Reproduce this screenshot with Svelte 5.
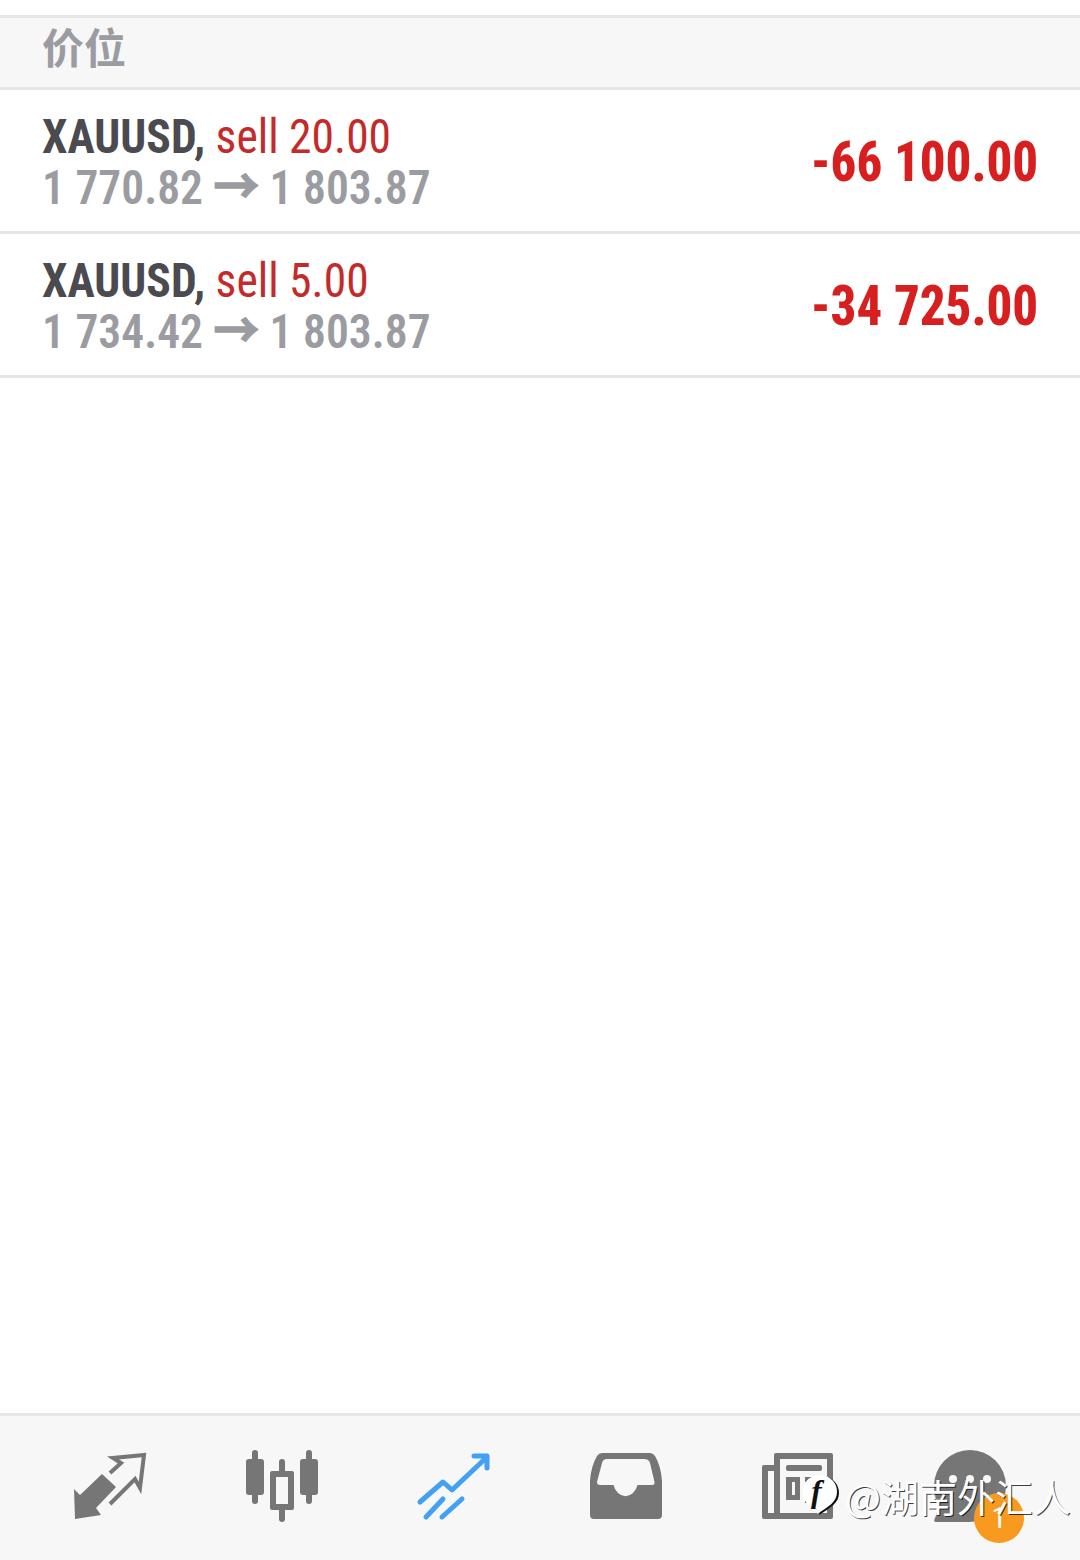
<script>
	const positions = [
		{ symbol: 'XAUUSD,', lots: 'sell 20.00', open: '1 770.82', close: '1 803.87', profit: '-66 100.00' },
		{ symbol: 'XAUUSD,', lots: 'sell 5.00', open: '1 734.42', close: '1 803.87', profit: '-34 725.00' }
	];
</script>

<div class="page">
	<div class="section">价位</div>

	{#each positions as p}
		<div class="row">
			<div class="info">
				<div class="title"><b>{p.symbol}</b> <span class="lots">{p.lots}</span></div>
				<div class="prices">{p.open} <span class="arrow">→</span> {p.close}</div>
			</div>
			<div class="profit">{p.profit}</div>
		</div>
	{/each}

	<div class="spacer"></div>

	<nav class="tabs">
		<svg viewBox="0 0 80 80">
			<path class="fill" d="M4 43 10 49 32 28 46 41 26 62 31 69 5 73Z" />
			<path class="line" d="M40 27 51 17 43 12 74 9 70 42 65 33 40 58" />
		</svg>
		<svg viewBox="0 0 80 80">
			<path class="wick" d="M13 7V55M40 16V25M40 64V73M67 7V55" />
			<rect class="fill" x="4" y="13" width="18" height="36" rx="3" />
			<rect class="fill" x="58" y="13" width="18" height="36" rx="3" />
			<path class="fill" fill-rule="evenodd" d="M30 25H50Q52 25 52 27V62Q52 64 50 64H30Q28 64 28 62V27Q28 25 30 25ZM34 31V58H46V31Z" />
		</svg>
		<svg viewBox="0 0 80 80">
			<path class="blue" d="M6 56 29 36 38 44 73 11M60 10H73V22M12 71 29 53M28 71 48 53" />
		</svg>
		<svg viewBox="0 0 80 80">
			<path class="fill" fill-rule="evenodd" d="M16 7H64Q67 7 69 10 75 20 76 35V69Q76 73 72 73H8Q4 73 4 69V35Q5 20 11 10 13 7 16 7ZM21 13Q17 13 16 17L11 36Q11 39 14 39H27.500A12.500 15.500 0 0 0 51.500 39H66Q69 39 68.500 36L64 17Q63 13 58 13Z" />
		</svg>
		<svg viewBox="0 0 80 80">
			<path class="fill" fill-rule="evenodd" d="M18 7H73Q75 7 75 9V71Q75 73 73 73H6Q4 73 4 71V21Q4 19 6 19H16V9Q16 7 18 7ZM22 13V67H69V13ZM10 25V67H16V25Z" />
			<rect class="fill" x="28" y="19" width="36" height="6" rx="2" />
			<path class="fill" fill-rule="evenodd" d="M28 31H42V54H28ZM34 36V49H37V36Z" />
			<path class="fill" d="M47 31H64V36H47ZM47 42H64V47H47ZM47 52H64V57H47Z" />
		</svg>
		<div class="chat">
			<svg viewBox="0 0 80 80">
				<path class="fill" d="M40 4A36 36 0 0 1 40 76H6Q3 76 5 72 8 66 8 56 4 49 4 40A36 36 0 0 1 40 4Z" />
				<circle class="dot" cx="23" cy="33" r="4" />
				<circle class="dot" cx="40" cy="33" r="4" />
				<circle class="dot" cx="57" cy="33" r="4" />
			</svg>
			<span class="badge">1</span>
		</div>

		<div class="watermark">
			<svg class="logo" viewBox="0 0 40 46">
				<path class="bubble-back" d="M20 3A17 17 0 0 1 37 20C37 30 28 35 17 42 18 38 17 37 14 36A17 17 0 0 1 20 3Z" />
				<path class="bubble" d="M19 2A17 17 0 0 1 35 19C35 29 26 34 15 41 16 37 15 36 12 35A17 17 0 0 1 19 2Z" />
				<text x="9" y="29" class="logo-f">f</text>
			</svg>
			<span>@湖南外汇人</span>
		</div>
	</nav>
</div>

<style>
	:global(body) {
		margin: 0;
		background: #fff;
	}
	.page {
		width: 1080px;
		height: 1560px;
		display: flex;
		flex-direction: column;
		padding-top: 15px;
		box-sizing: border-box;
		font-family: 'Roboto', 'Noto Sans CJK SC', sans-serif;
		font-stretch: 75%;
	}
	.section {
		height: 69px;
		padding-left: 42px;
		background: #f7f7f7;
		border-top: 3px solid #e6e6e6;
		border-bottom: 3px solid #e6e6e6;
		color: #9b9ca1;
		font: bold 42px/56px 'Noto Sans CJK SC', sans-serif;
	}
	.row {
		height: 141px;
		display: flex;
		align-items: center;
		justify-content: space-between;
		padding: 0 42px;
		border-bottom: 3px solid #e6e6e6;
	}
	.info {
		transform: scaleX(0.93);
		transform-origin: left center;
		padding-top: 2px;
	}
	.title,
	.prices {
		font-size: 49px;
		line-height: 51px;
		white-space: nowrap;
	}
	.title b {
		color: #4a4a50;
		font-weight: 700;
	}
	.lots {
		color: #c42a2a;
	}
	.prices {
		color: #9b9ca1;
		font-weight: 600;
	}
	.arrow {
		font-weight: 700;
		-webkit-text-stroke: 1.5px #9b9ca1;
	}
	.profit {
		color: #d81f1f;
		font-size: 55px;
		font-weight: 800;
		white-space: nowrap;
		padding-top: 2px;
		transform: scaleX(0.924);
		transform-origin: right center;
	}
	.spacer {
		flex: 1;
	}
	.tabs {
		position: relative;
		height: 144px;
		border-top: 3px solid #e6e6e6;
		background: #f7f7f7;
		padding: 0 24px;
		display: grid;
		grid-template-columns: repeat(6, 172px);
		justify-items: center;
		align-items: start;
	}
	.tabs svg {
		width: 80px;
		height: 80px;
		margin-top: 30px;
	}
	.fill {
		fill: #767676;
	}
	.line {
		fill: none;
		stroke: #767676;
		stroke-width: 4;
	}
	.wick {
		fill: none;
		stroke: #767676;
		stroke-width: 6;
		stroke-linecap: round;
	}
	.blue {
		fill: none;
		stroke: #42a0f5;
		stroke-width: 5;
		stroke-linecap: round;
		stroke-linejoin: round;
	}
	.dot {
		fill: #f7f7f7;
	}
	.chat {
		position: relative;
	}
	.badge {
		position: absolute;
		left: 44px;
		top: 77px;
		width: 50px;
		height: 50px;
		border-radius: 50%;
		background: #f79a1e;
		color: #fff;
		font-size: 30px;
		line-height: 50px;
		text-align: center;
	}
	.watermark {
		position: absolute;
		left: 802px;
		top: 57px;
		display: flex;
		align-items: center;
		gap: 3px;
		color: #fff;
		font: 400 38px/46px 'Noto Sans CJK SC', sans-serif;
		text-shadow: 1px 1px 0 rgba(0, 0, 0, 0.75);
		white-space: nowrap;
	}
	.tabs .logo {
		width: 40px;
		height: 46px;
		margin: 0;
	}
	.bubble {
		fill: #fff;
	}
	.bubble-back {
		fill: #111;
	}
	.logo-f {
		font: italic 700 32px 'Liberation Serif', serif;
		fill: #111;
		text-shadow: none;
	}
</style>
